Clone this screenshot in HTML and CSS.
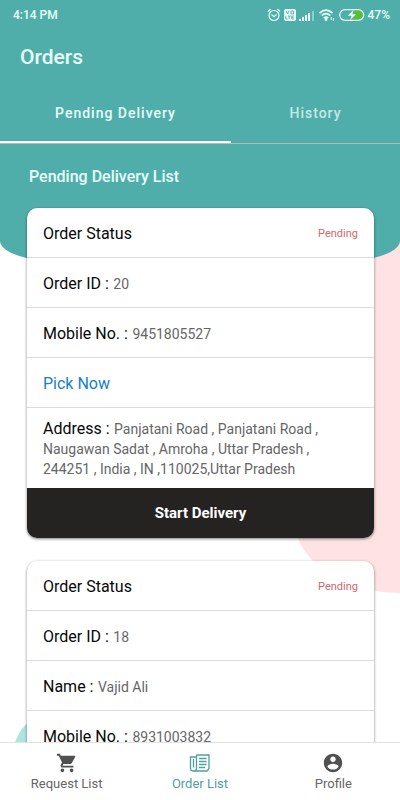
FILE: index.html
```html
<!DOCTYPE html>
<html lang="en">
<head>
<meta charset="utf-8">
<meta name="viewport" content="width=device-width, initial-scale=1">
<title>Orders</title>
<link rel="stylesheet" href="styles.css">
</head>
<body>
<div class="app">
  <div class="backdrop" aria-hidden="true">
    <div class="blob-pink"></div>
    <div class="blob-mint"></div>
    <div class="blob-teal"></div>
  </div>

  <div class="status-bar">
    <span>4:14 PM</span>
    <div class="status-icons">
      <svg width="14" height="14" viewBox="0 0 14 14" fill="none" stroke="currentColor" stroke-width="1.200" stroke-linecap="round"><circle cx="7" cy="7.500" r="5"/><path d="M1.200 3.200 3.200 1.500M12.800 3.200 10.800 1.500M4.800 6.800 7 8.600 9.200 6.800"/></svg>
      <svg width="12" height="12" viewBox="0 0 12 12"><rect width="12" height="12" rx="2" fill="currentColor"/><path d="M2 1.800 3.500 5 5 1.800M7 2H9.500V5H7ZM1.800 6.800V10H3.500M4 7H6.500M5.200 7V10M9.800 7H7.800V10H9.800M7.800 8.500H9.500" fill="none" stroke="#50aeaa" stroke-width="0.900"/></svg>
      <svg width="16" height="12" viewBox="0 0 16 12" fill="currentColor"><path d="M0 10h2v2H0zM3 8h2v4H3zM6 6h2v6H6zM9 4h2v8H9z"/><path d="M13 2h2v10h-2z" opacity=".4"/></svg>
      <svg width="18" height="14" viewBox="0 0 18 14" fill="none" stroke="currentColor" stroke-width="1.700"><path d="M1.500 5.200Q8 -.8 14.500 5.200M3.700 7.700Q8 3.700 12.300 7.700M5.800 10.100Q8 8.100 10.200 10.100"/><circle cx="8" cy="11.500" r=".6"/><path d="M13.300 9v3M15.500 10v3" stroke-width="1"/></svg>
      <svg width="26" height="12" viewBox="0 0 26 12"><path d="M15 1h5a5 5 0 0 1 0 10h-7z" fill="#58bd3f"/><rect x=".7" y=".7" width="24" height="10.600" rx="5.300" fill="none" stroke="currentColor" stroke-width="1.200"/><path d="M14.500 1 8.800 6.800h3.700L11.200 11 17 5.200h-3.700z" fill="currentColor"/></svg>
      <span>47%</span>
    </div>
  </div>

  <header class="title-bar"><h1>Orders</h1></header>

  <nav class="tabs" aria-label="Deliveries">
    <a class="tab tab-active" href="#pending">Pending Delivery</a>
    <a class="tab" href="#history">History</a>
  </nav>

  <main class="content" id="pending">
    <h2>Pending Delivery List</h2>
    <article class="card">
      <div class="row"><span class="label">Order Status</span><span class="state">Pending</span></div>
      <div class="row"><p><span class="label key">Order ID :</span> 20</p></div>
      <div class="row"><p><span class="label key">Mobile No. :</span> 9451805527</p></div>
      <div class="row"><a class="label pick" href="#pick">Pick Now</a></div>
      <div class="row address"><p><span class="label key">Address :</span> Panjatani Road , Panjatani Road , Naugawan Sadat , Amroha , Uttar Pradesh , 244251 , India , IN ,110025,Uttar Pradesh</p></div>
      <button class="start" type="button">Start Delivery</button>
    </article>
    <article class="card">
      <div class="row"><span class="label">Order Status</span><span class="state">Pending</span></div>
      <div class="row"><p><span class="label key">Order ID :</span> 18</p></div>
      <div class="row"><p><span class="label key">Name :</span> Vajid Ali</p></div>
      <div class="row"><p><span class="label key">Mobile No. :</span> 8931003832</p></div>
    </article>
  </main>

  <nav class="bottom-nav" aria-label="Main">
    <a class="nav-item" href="#requests">
      <svg width="22" height="22" viewBox="0 0 24 24" fill="currentColor"><path d="M7 18c-1.100 0-1.990.9-1.990 2S5.900 22 7 22s2-.9 2-2-.9-2-2-2zM1 2v2h2l3.600 7.590-1.350 2.450c-.16.280-.25.610-.25.960 0 1.100.9 2 2 2h12v-2H7.420c-.14 0-.25-.11-.25-.25l.03-.12.9-1.630h7.450c.75 0 1.410-.41 1.750-1.030l3.580-6.490A1 1 0 0 0 20 4H5.210l-.94-2H1zm16 16c-1.100 0-1.990.9-1.990 2s.89 2 1.990 2 2-.9 2-2-.9-2-2-2z"/></svg>
      <span>Request List</span>
    </a>
    <a class="nav-item nav-active" href="#orders">
      <svg width="22" height="22" viewBox="0 0 22 22" fill="none" stroke="currentColor" stroke-width="1.300"><path d="M7.500 3H20V16.500L18 19H4Q1.500 19 1.500 16.500V5H7.500M7.500 3V16.500Q7.500 19 5 19M4.500 7V15.500"/><path d="M10 6.500H17.500M10 9.500H17.500M10 12.500H17.500M10 15.500H16"/></svg>
      <span>Order List</span>
    </a>
    <a class="nav-item" href="#profile">
      <svg width="22" height="22" viewBox="0 0 24 24" fill="currentColor"><path d="M12 2C6.480 2 2 6.480 2 12s4.480 10 10 10 10-4.480 10-10S17.520 2 12 2zm0 3c1.660 0 3 1.340 3 3s-1.340 3-3 3-3-1.340-3-3 1.340-3 3-3zm0 14.200c-2.500 0-4.710-1.280-6-3.220.03-1.990 4-3.080 6-3.080 1.990 0 5.970 1.090 6 3.080-1.290 1.940-3.500 3.220-6 3.220z"/></svg>
      <span>Profile</span>
    </a>
  </nav>
</div>
</body>
</html>
```
FILE: styles.css
```css
* { box-sizing: border-box; }

body {
  margin: 0;
  font-family: Roboto, "Liberation Sans", sans-serif;
  color: #666;
  background: #fff;
}

h1, h2, p { margin: 0; }
a { color: inherit; text-decoration: none; }

.app {
  position: relative;
  display: flex;
  flex-direction: column;
  height: 100vh;
  overflow: hidden;
}

/* Decorative shapes behind the page */
.backdrop {
  position: absolute;
  inset: 0;
  overflow: hidden;
  z-index: -1;
}

.blob-teal {
  position: absolute;
  inset: 0 0 auto;
  height: 263px;
  background: #50aeaa;
  border-radius: 0 0 72px 72px / 0 0 22px 22px;
}

.blob-pink {
  position: absolute;
  top: 200px;
  right: -106px;
  width: 212px;
  height: 393px;
  background: #ffe2e4;
  border-radius: 106px / 75px;
}

.blob-mint {
  position: absolute;
  left: 13px;
  bottom: -1px;
  width: 90px;
  height: 90px;
  background: #aee6df;
  border-radius: 50%;
}

.status-bar {
  display: flex;
  flex: none;
  align-items: center;
  justify-content: space-between;
  height: 29px;
  padding: 0 10px 0 13px;
  color: #e8fffc;
  font-size: 12px;
  font-weight: 500;
}

.status-icons {
  display: flex;
  align-items: center;
  gap: 3px;
}

.title-bar {
  display: flex;
  flex: none;
  align-items: center;
  height: 55px;
  padding: 0 20px;
  color: #e8fffc;
}

h1 {
  font-size: 21px;
  font-weight: 500;
}

.tabs {
  display: flex;
  flex: none;
  height: 60px;
  border-bottom: 1px solid #b8b8b5;
}

.tab {
  display: flex;
  flex: 169;
  align-items: center;
  justify-content: center;
  color: #c5e9e5;
  font-size: 14px;
  font-weight: 500;
  letter-spacing: 1px;
  border-bottom: 2px solid transparent;
}

.tab-active {
  flex: 231;
  color: #e8fffc;
  border-color: #fff;
}

.content {
  flex: 1;
  min-height: 0;
  padding: 0 26px 0 27px;
  overflow: hidden;
}

h2 {
  padding: 23px 2px 21px;
  color: #e8fffc;
  font-size: 16px;
  font-weight: 500;
  line-height: 20px;
}

.card {
  margin-bottom: 23px;
  overflow: hidden;
  background: #fff;
  border-radius: 10px;
  box-shadow: 0 1px 3px rgba(0, 0, 0, 0.5);
}

.row {
  display: flex;
  align-items: center;
  justify-content: space-between;
  height: 50px;
  padding: 2px 16px 0;
  font-size: 14px;
  line-height: 20px;
  border-bottom: 1px solid #dcdcdc;
}

.label {
  color: #080808;
  font-size: 16px;
  line-height: 16px;
}

.key { margin-right: 1px; }

.pick { color: #1580ca; }

.state {
  color: #cd6870;
  font-size: 11px;
}

.address {
  height: auto;
  padding: 11px 16px 9px;
  border-bottom: 0;
}

.start {
  display: block;
  width: 100%;
  height: 50px;
  padding: 0;
  color: #fff;
  font: 700 15px/20px Roboto, "Liberation Sans", sans-serif;
  background: #242321;
  border: 0;
}

.bottom-nav {
  display: grid;
  flex: none;
  grid-template-columns: repeat(3, 1fr);
  height: 58px;
  background: #fff;
  border-top: 1px solid #e2e2e2;
}

.nav-item {
  display: flex;
  flex-direction: column;
  align-items: center;
  justify-content: center;
  gap: 2px;
  color: #666;
  font-size: 13px;
  line-height: 16px;
}

.nav-item svg { color: #505050; }

.nav-active,
.nav-active svg { color: #50a09d; }
```
